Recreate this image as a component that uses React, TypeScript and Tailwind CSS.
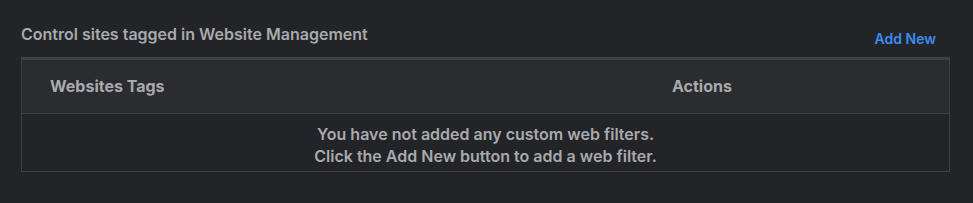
export default function App() {
  return (
    <div className="h-[203px] w-full bg-[#232427] px-[21px] pt-[23px] font-['Inter',sans-serif] text-[#a8aaad]">
      <div className="flex items-end justify-between pr-[16px]">
        <h2 className="text-[16px] font-semibold leading-[22px]">Control sites tagged in Website Management</h2>
        <button className="translate-y-[4px] text-[14px] font-semibold text-[#3b8cf5]">Add New</button>
      </div>
      <div className="mt-[12px] mr-[2px] border border-t-[3px] border-[#3f4043]">
        <table className="w-full">
          <thead className="bg-[#2b2c2f]">
            <tr className="h-[53px] text-left text-[16px] font-semibold">
              <th className="w-[623px] pl-[28px]">Websites Tags</th>
              <th className="pl-[27px]">Actions</th>
            </tr>
          </thead>
          <tbody>
            <tr className="border-t border-[#3f4043]">
              <td colSpan={2} className="pt-[9px] pb-[4px] text-center text-[16px] font-semibold leading-[22px]">
                You have not added any custom web filters.
                <br />
                Click the Add New button to add a web filter.
              </td>
            </tr>
          </tbody>
        </table>
      </div>
    </div>
  );
}
